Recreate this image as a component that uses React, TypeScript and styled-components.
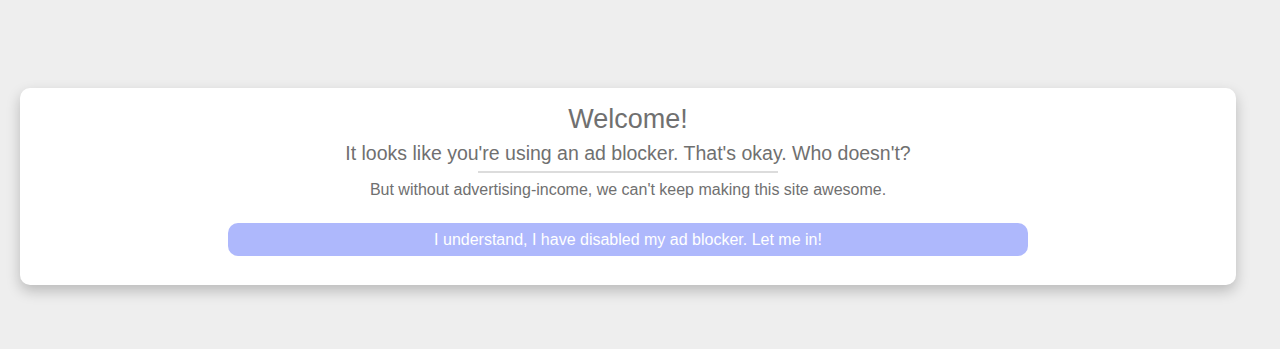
import React from 'react';
import styled, { createGlobalStyle } from 'styled-components';

/**********************************
  Global
**********************************/
const GlobalStyle = createGlobalStyle`
  html, body {
    margin: 0;
    padding: 0;
    background: #eeeeee;
    font-family: 'Liberation Sans', Arial, sans-serif;
  }
`

/**********************************
  Styled Components
**********************************/
const Page = styled.div`
  height: 349px;
  padding-top: 88px;
  padding-left: 20px;
  box-sizing: border-box;
`

const Card = styled.div`
  width: 1216px;
  height: 197px;
  box-sizing: border-box;
  background: #ffffff;
  border-radius: 10px;
  box-shadow: 0 6px 14px rgba(0, 0, 0, 0.22);
  display: flex;
  flex-direction: column;
  align-items: center;
  padding-top: 15px;
  color: #707070;
  text-align: center;
`

const Title = styled.h1`
  font-size: 27px;
  font-weight: normal;
  line-height: 32px;
  margin: 0;
`

const Subtitle = styled.h2`
  font-size: 19.5px;
  font-weight: normal;
  line-height: 24px;
  margin: 6px 0 0;
`

const Divider = styled.hr`
  width: 300px;
  height: 0;
  border: none;
  border-top: 2px solid #dcdcdc;
  margin: 6px 0 0;
`

const Note = styled.p`
  font-size: 16px;
  line-height: 20px;
  margin: 7px 0 0;
`

const EnterButton = styled.button`
  width: 800px;
  height: 33px;
  margin-top: 23px;
  border: none;
  border-radius: 10px;
  background: #aeb8fc;
  color: #ffffff;
  font-family: 'Liberation Sans', Arial, sans-serif;
  font-size: 16px;
  cursor: pointer;
`

/**********************************
  Main App
**********************************/
function App() {
  return (
    <Page>
      <GlobalStyle />
      <Card>
        <Title>Welcome!</Title>
        <Subtitle>It looks like you're using an ad blocker. That's okay. Who doesn't?</Subtitle>
        <Divider />
        <Note>But without advertising-income, we can't keep making this site awesome.</Note>
        <EnterButton>I understand, I have disabled my ad blocker. Let me in!</EnterButton>
      </Card>
    </Page>
  );
}

export default App;
